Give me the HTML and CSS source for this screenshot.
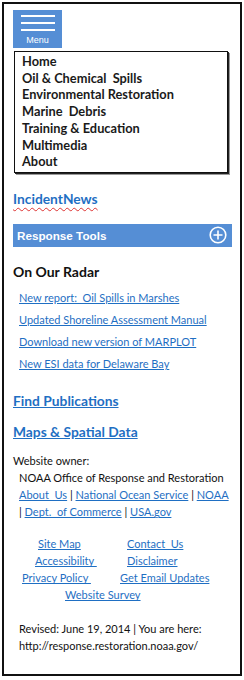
FILE: index.html
```html
<!DOCTYPE html>
<html>
  <head>
    <link rel="stylesheet" href="styles.css">
  </head>
  <body>
    <div class="frame">
      <div class="menu-button">
        <span class="bar"></span>
        <span class="bar"></span>
        <span class="bar"></span>
        <span class="menu-label">Menu</span>
      </div>

      <ul class="menu-list">
        <li>Home</li>
        <li>Oil &amp; Chemical&nbsp; Spills</li>
        <li>Environmental Restoration</li>
        <li>Marine&nbsp; Debris</li>
        <li>Training &amp; Education</li>
        <li>Multimedia</li>
        <li>About</li>
      </ul>

      <a class="big-link incident" href="#">IncidentNews</a>

      <div class="tools-bar">
        <span>Response Tools</span>
        <svg width="18" height="18" viewBox="0 0 18 18">
          <circle cx="9" cy="9" r="7.8" fill="none" stroke="#fff" stroke-width="1.6" />
          <path d="M9 4.5v9M4.5 9h9" stroke="#fff" stroke-width="1.6" />
        </svg>
      </div>

      <h3 class="radar-title">On Our Radar</h3>
      <ul class="radar-list">
        <li><a href="#">New report:&nbsp; Oil Spills in Marshes</a></li>
        <li><a href="#">Updated Shoreline Assessment Manual</a></li>
        <li><a href="#" class="grammar">Download new version of MARPLOT</a></li>
        <li><a href="#">New ESI data for Delaware Bay</a></li>
      </ul>

      <a class="big-link pubs" href="#">Find Publications</a>
      <a class="big-link maps" href="#">Maps &amp; Spatial Data</a>

      <div class="owner">
        <div>Website owner:</div>
        <div class="indent">NOAA Office of Response and Restoration</div>
        <div class="indent"><a href="#">About&nbsp; Us</a> | <a href="#">National Ocean Service</a> | <a href="#">NOAA</a></div>
        <div class="indent">| <a href="#">Dept.&nbsp; of Commerce</a> | <a href="#">USA.gov</a></div>
      </div>

      <div class="footer-links">
        <a href="#" class="sitemap">Site Map</a>
        <a href="#" class="right-a">Contact&nbsp; Us</a>
        <a href="#" class="access">Accessibility&nbsp;</a>
        <a href="#" class="right-a">Disclaimer</a>
        <a href="#" class="privacy">Privacy Policy&nbsp;</a>
        <a href="#" class="right-b">Get Email Updates</a>
        <a href="#" class="survey">Website Survey</a>
      </div>

      <div class="revised">
        <div>Revised: June 19, 2014 | You are here:</div>
        <div>http://response.restoration.noaa.gov/</div>
      </div>
    </div>
  </body>
</html>
```

FILE: styles.css
```css
body {
  margin: 0;
  background-color: #fff;
  font-family: Lato, "Open Sans", sans-serif;
  color: #111;
}

.frame {
  margin: 2px 0 0 2px;
  border: 2px solid #111;
  width: 227px;
  height: 664px;
  padding: 6px 0 0 9px;
  overflow: hidden;
}

.menu-button {
  width: 49px;
  height: 38px;
  background-color: #558ed5;
  display: flex;
  flex-direction: column;
  align-items: center;
  padding-top: 5px;
  box-sizing: border-box;
}

.bar {
  width: 34px;
  height: 2px;
  background-color: #fff;
  margin-bottom: 5px;
}

.menu-label {
  color: #fff;
  font-family: "Liberation Sans", Arial, sans-serif;
  font-size: 9px;
  margin-top: -1px;
}

.menu-list {
  list-style: none;
  margin: 3px 0 0 1px;
  padding: 1px 0 2px 7px;
  width: 205px;
  border: 1px solid #111;
  box-shadow: 1px 1px 0 #222, 2px 2px 0 #999;
}

.menu-list li {
  font-weight: bold;
  font-size: 12.8px;
  line-height: 16.7px;
  color: #1a1a1a;
}

a {
  color: #1f6fc3;
  text-decoration: underline;
}

.big-link {
  display: block;
  width: fit-content;
  font-weight: bold;
  font-size: 13.8px;
}

.incident {
  margin-top: 17px;
  text-decoration: underline wavy #d33;
  text-underline-offset: 3px;
  text-decoration-thickness: 1px;
}

.tools-bar {
  margin-top: 17px;
  width: 219px;
  height: 23px;
  background-color: #558ed5;
  display: flex;
  align-items: center;
  justify-content: space-between;
  padding: 0 5px 0 4px;
  box-sizing: border-box;
  color: #fff;
  font-family: "Liberation Sans", Arial, sans-serif;
  font-weight: bold;
  font-size: 11.7px;
}

.radar-title {
  margin: 16px 0 0 0;
  font-size: 14px;
  line-height: 18px;
  font-weight: bold;
}

.radar-list {
  list-style: none;
  margin: 10px 0 0 6px;
  padding: 0;
}

.radar-list li {
  font-size: 11px;
  line-height: 14.5px;
  margin-bottom: 7.5px;
}

.grammar {
  text-decoration-color: #1f6fc3;
}

.pubs {
  margin-top: 21px;
}

.maps {
  margin-top: 14px;
}

.owner {
  margin-top: 12px;
  font-size: 11px;
  line-height: 17px;
  white-space: nowrap;
}

.indent {
  margin-left: 6px;
}

.footer-links {
  margin-top: 15px;
  display: grid;
  grid-template-columns: 101px 1fr;
  justify-items: start;
  font-size: 11px;
  line-height: 17px;
}

.sitemap {
  margin-left: 25px;
}

.access {
  margin-left: 22px;
}

.privacy {
  margin-left: 9px;
}

.right-a {
  margin-left: 13px;
}

.right-b {
  margin-left: 6px;
}

.survey {
  grid-column: 1 / -1;
  margin-left: 52px;
}

.revised {
  margin: 17px 0 0 6px;
  font-size: 11px;
  line-height: 17px;
}
```
